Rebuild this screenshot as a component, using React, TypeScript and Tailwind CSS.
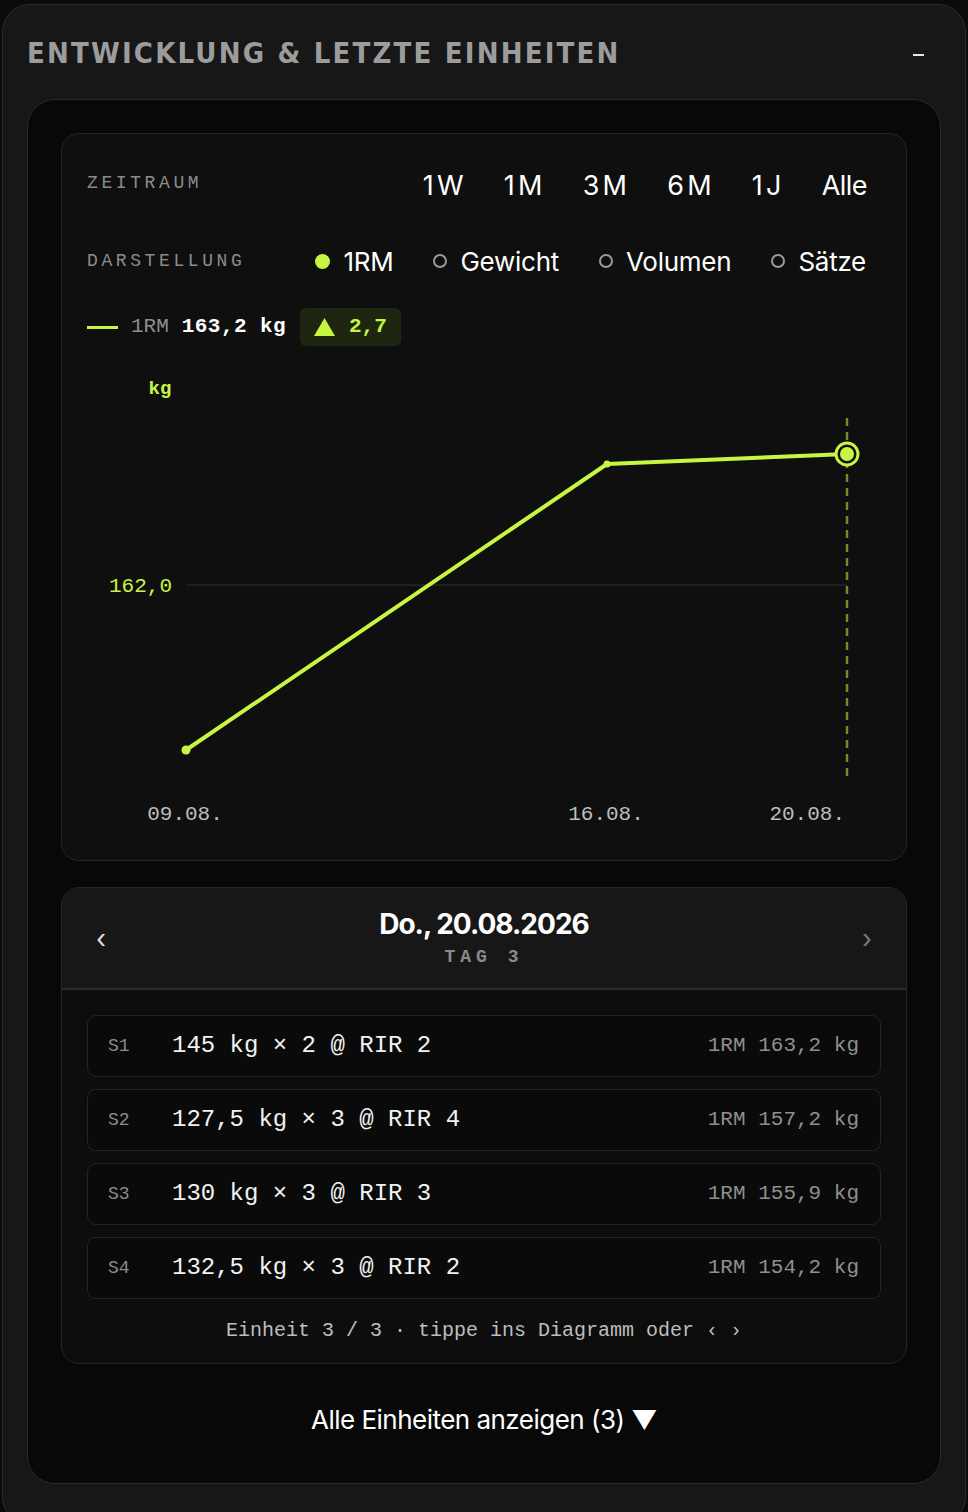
import React from "react";

const LIME = "#c8f542";

const periods = ["1W", "1M", "3M", "6M", "1J", "Alle"];
const modes = [
  { label: "1RM", active: true },
  { label: "Gewicht", active: false },
  { label: "Volumen", active: false },
  { label: "Sätze", active: false },
];

const sets = [
  { id: "S1", main: "145 kg × 2 @ RIR 2", rm: "1RM 163,2 kg" },
  { id: "S2", main: "127,5 kg × 3 @ RIR 4", rm: "1RM 157,2 kg" },
  { id: "S3", main: "130 kg × 3 @ RIR 3", rm: "1RM 155,9 kg" },
  { id: "S4", main: "132,5 kg × 3 @ RIR 2", rm: "1RM 154,2 kg" },
];

const mono = "font-['Liberation_Mono','DejaVu_Sans_Mono',monospace]";
const sans = "font-['Inter','Noto_Sans',sans-serif]";

function Chart() {
  const pts: [number, number][] = [
    [124, 404],
    [545, 118],
    [785, 108],
  ];
  const d = pts.map((p, i) => `${i === 0 ? "M" : "L"}${p[0]} ${p[1]}`).join(" ");
  return (
    <svg width={844} height={514} viewBox="0 0 844 514" className="block">
      <text
        x={98}
        y={48}
        textAnchor="middle"
        fill={LIME}
        fontFamily="Liberation Mono, DejaVu Sans Mono, monospace"
        fontWeight={700}
        fontSize={19}
      >
        kg
      </text>
      <line x1={125} y1={239} x2={785} y2={239} stroke="#262626" strokeWidth={1.5} />
      <text
        x={110}
        y={246}
        textAnchor="end"
        fill={LIME}
        fontFamily="Liberation Mono, DejaVu Sans Mono, monospace"
        fontSize={21}
      >
        162,0
      </text>
      <line
        x1={785}
        y1={72}
        x2={785}
        y2={436}
        stroke={LIME}
        strokeOpacity={0.55}
        strokeWidth={2.5}
        strokeDasharray="8 6"
      />
      <path d={d} fill="none" stroke={LIME} strokeWidth={4} strokeLinejoin="round" strokeLinecap="round" />
      <circle cx={124} cy={404} r={4.5} fill={LIME} />
      <circle cx={545} cy={118} r={3.5} fill={LIME} />
      <circle cx={785} cy={108} r={11} fill="#0f0f0f" stroke={LIME} strokeWidth={3} />
      <circle cx={785} cy={108} r={7} fill={LIME} />
      {[
        { x: 123, t: "09.08.", a: "middle" },
        { x: 544, t: "16.08.", a: "middle" },
        { x: 783, t: "20.08.", a: "end" },
      ].map((l) => (
        <text
          key={l.t}
          x={l.x}
          y={474}
          textAnchor={l.a as "middle" | "end"}
          fill="#bdbdbd"
          fontFamily="Liberation Mono, DejaVu Sans Mono, monospace"
          fontSize={21}
        >
          {l.t}
        </text>
      ))}
    </svg>
  );
}

export default function App() {
  return (
    <div className="min-h-screen bg-[#0b0b0b] px-[2px] pt-[4px]">
      <div className="rounded-[28px] border border-[#2c2c2c] bg-[#171717] px-[24px] pb-[40px]">
        {/* header */}
        <div className="flex h-[94px] items-center justify-between">
          <h2
            className={`font-['Liberation_Sans_Narrow','DejaVu_Sans_Condensed','Roboto',sans-serif] mt-[3px] text-[29px] font-bold uppercase tracking-[0.075em] text-[#9c9c9c]`}
          >
            ENTWICKLUNG &amp; LETZTE EINHEITEN
          </h2>
          <span className="mr-[17px] mt-[5px] block h-[2px] w-[11px] bg-[#e5e5e5]" />
        </div>

        {/* inner panel */}
        <div className="rounded-[28px] border border-[#2a2a2a] bg-[#080808] px-[33px] pb-[45px] pt-[33px]">
          {/* chart card */}
          <div className="rounded-[18px] border border-[#262626] bg-[#0f0f0f]">
            <div className="px-[25px] pt-[27px]">
              <div className="flex h-[50px] items-center justify-between">
                <span className={`${mono} -mt-[5px] text-[18px] tracking-[0.2em] text-[#8c8c8c]`}>ZEITRAUM</span>
                <div className={`${sans} flex items-center gap-[37px] pr-[14px] text-[27px] text-white`}>
                  {periods.map((p) => (
                    <span key={p} className={p === "Alle" ? "tracking-[-0.02em]" : "tracking-[0.12em]"}>
                      {p}
                    </span>
                  ))}
                </div>
              </div>
              <div className="mt-[25px] flex h-[50px] items-center justify-between">
                <span className={`${mono} text-[18px] tracking-[0.2em] text-[#8c8c8c]`}>DARSTELLUNG</span>
                <div className={`${sans} flex items-center gap-[40px] pr-[15px] text-[26px] tracking-[-0.01em] text-white`}>
                  {modes.map((m) => (
                    <span key={m.label} className="flex items-center gap-[13px]">
                      {m.active ? (
                        <span className="block h-[15px] w-[15px] rounded-full bg-[#c8f542]" />
                      ) : (
                        <span className="block h-[14px] w-[14px] rounded-full border-2 border-[#9a9a9a]" />
                      )}
                      {m.label}
                    </span>
                  ))}
                </div>
              </div>
              <div className={`${mono} mt-[22px] flex h-[38px] items-center text-[21px]`}>
                <span className="mr-[13px] block h-[3px] w-[31px] bg-[#c8f542]" />
                <span className="text-[#8f8f8f]">1RM</span>
                <span className="ml-[13px] font-bold tracking-[0.02em] text-white">163,2 kg</span>
                <span className="ml-[14px] flex h-[38px] items-center gap-[14px] rounded-[6px] bg-[#1e2611] px-[14px] font-bold text-[#c8f542]">
                  <svg width="21" height="18" viewBox="0 0 21 18">
                    <path d="M10.5 0 L21 18 L0 18 Z" fill="#c8f542" />
                  </svg>
                  2,7
                </span>
              </div>
            </div>
            <Chart />
          </div>

          {/* session card */}
          <div className="mt-[26px] overflow-hidden rounded-[18px] border border-[#262626] bg-[#0d0d0d]">
            <div className="flex h-[102px] items-center justify-between border-b-2 border-[#2a2a2a] bg-[#171717] px-[34px]">
              <span className={`${sans} text-[26px] text-[#e0e0e0]`}>‹</span>
              <div className="flex flex-col items-center">
                <span className={`${sans} text-[28px] font-bold leading-[36px] tracking-[-0.035em] text-white`}>
                  Do., 20.08.2026
                </span>
                <span className={`${mono} mt-[2px] text-[18px] font-bold tracking-[0.28em] text-[#8a8a8a]`}>TAG 3</span>
              </div>
              <span className={`${sans} text-[26px] text-[#7a7a7a]`}>›</span>
            </div>
            <div className="flex flex-col gap-[12px] px-[25px] pt-[25px]">
              {sets.map((s) => (
                <div
                  key={s.id}
                  className={`${mono} flex h-[62px] items-center rounded-[9px] border border-[#242424] bg-[#0a0a0a] pl-[20px] pr-[21px]`}
                >
                  <span className="w-[64px] text-[18px] text-[#8c8c8c]">{s.id}</span>
                  <span className="text-[24px] text-[#f2f2f2]">{s.main}</span>
                  <span className="ml-auto text-[21px] text-[#8f8f8f]">{s.rm}</span>
                </div>
              ))}
            </div>
            <div className={`${mono} flex h-[64px] items-center justify-center text-[20px] text-[#bdbdbd]`}>
              Einheit 3 / 3 · tippe ins Diagramm oder ‹ ›
            </div>
          </div>

          {/* expand toggle */}
          <div className="mt-[38px] flex justify-center">
            <span className={`${sans} text-[26px] leading-[36px] tracking-[-0.02em] text-white`}>
              Alle Einheiten anzeigen (3) ▼
            </span>
          </div>
        </div>
      </div>
    </div>
  );
}
